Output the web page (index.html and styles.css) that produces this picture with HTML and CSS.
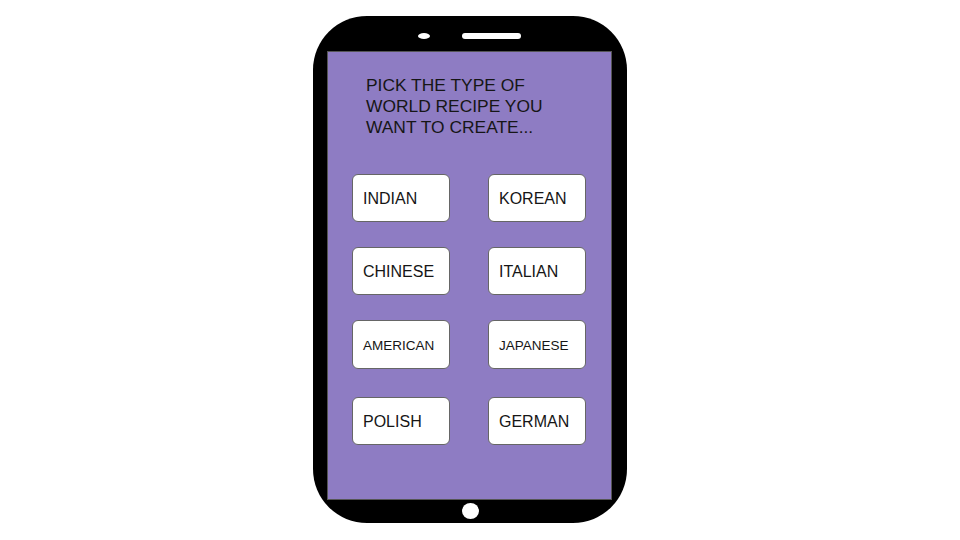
FILE: index.html
```html
<!DOCTYPE html>
<html>
<head>
<meta charset="utf-8">
<link rel="stylesheet" href="styles.css">
</head>
<body>
<div class="phone">
  <div class="phone-top">
    <span class="camera"></span>
    <span class="speaker"></span>
  </div>
  <div class="screen">
    <h1 class="title">PICK THE TYPE OF<br>WORLD RECIPE YOU<br>WANT TO CREATE...</h1>
    <div class="grid">
      <div class="btn">INDIAN</div>
      <div class="btn">KOREAN</div>
      <div class="btn">CHINESE</div>
      <div class="btn">ITALIAN</div>
      <div class="btn small">AMERICAN</div>
      <div class="btn small">JAPANESE</div>
      <div class="btn last">POLISH</div>
      <div class="btn last">GERMAN</div>
    </div>
  </div>
  <div class="phone-bottom">
    <span class="home"></span>
  </div>
</div>
</body>
</html>
```
FILE: styles.css
```css
html, body {
  margin: 0;
  background: #ffffff;
}
body {
  width: 960px;
  height: 540px;
  padding: 16px 0 0 313px;
  box-sizing: border-box;
  font-family: "Liberation Sans", Arial, sans-serif;
}
.phone {
  width: 314px;
  height: 507px;
  background: #000;
  border-radius: 54px;
  box-sizing: border-box;
  padding: 0 15px 0 14px;
  display: flex;
  flex-direction: column;
}
.phone-top {
  height: 35px;
  display: flex;
  align-items: flex-start;
  padding: 17px 0 0 91px;
  box-sizing: border-box;
  gap: 32px;
}
.camera {
  width: 12px;
  height: 6px;
  border-radius: 50%;
  background: #fff;
}
.speaker {
  width: 59px;
  height: 6px;
  border-radius: 3px;
  background: #fff;
}
.screen {
  height: 449px;
  background: #8e7cc3;
  border: 1px solid #555;
  box-sizing: border-box;
  padding: 23px 0 0 38px;
}
.title {
  margin: 0;
  font-weight: normal;
  font-size: 17.4px;
  line-height: 21px;
  color: #161616;
}
.grid {
  margin: 36px 0 0 -14px;
  display: grid;
  grid-template-columns: 98px 98px;
  grid-template-rows: 48px 48px 49px 51px;
  column-gap: 38px;
  row-gap: 25px;
}
.btn {
  background: #fff;
  border: 1px solid #666;
  border-radius: 6px;
  box-sizing: border-box;
  display: flex;
  align-items: center;
  padding: 1px 0 0 10px;
  font-size: 16px;
  color: #161616;
}
.btn.small {
  font-size: 13.5px;
}
.btn.last {
  margin-top: 3px;
}
.phone-bottom {
  flex: 1;
  display: flex;
  padding: 3px 0 0 135px;
  box-sizing: border-box;
}
.home {
  width: 17px;
  height: 16px;
  border-radius: 50%;
  background: #fff;
}
```
